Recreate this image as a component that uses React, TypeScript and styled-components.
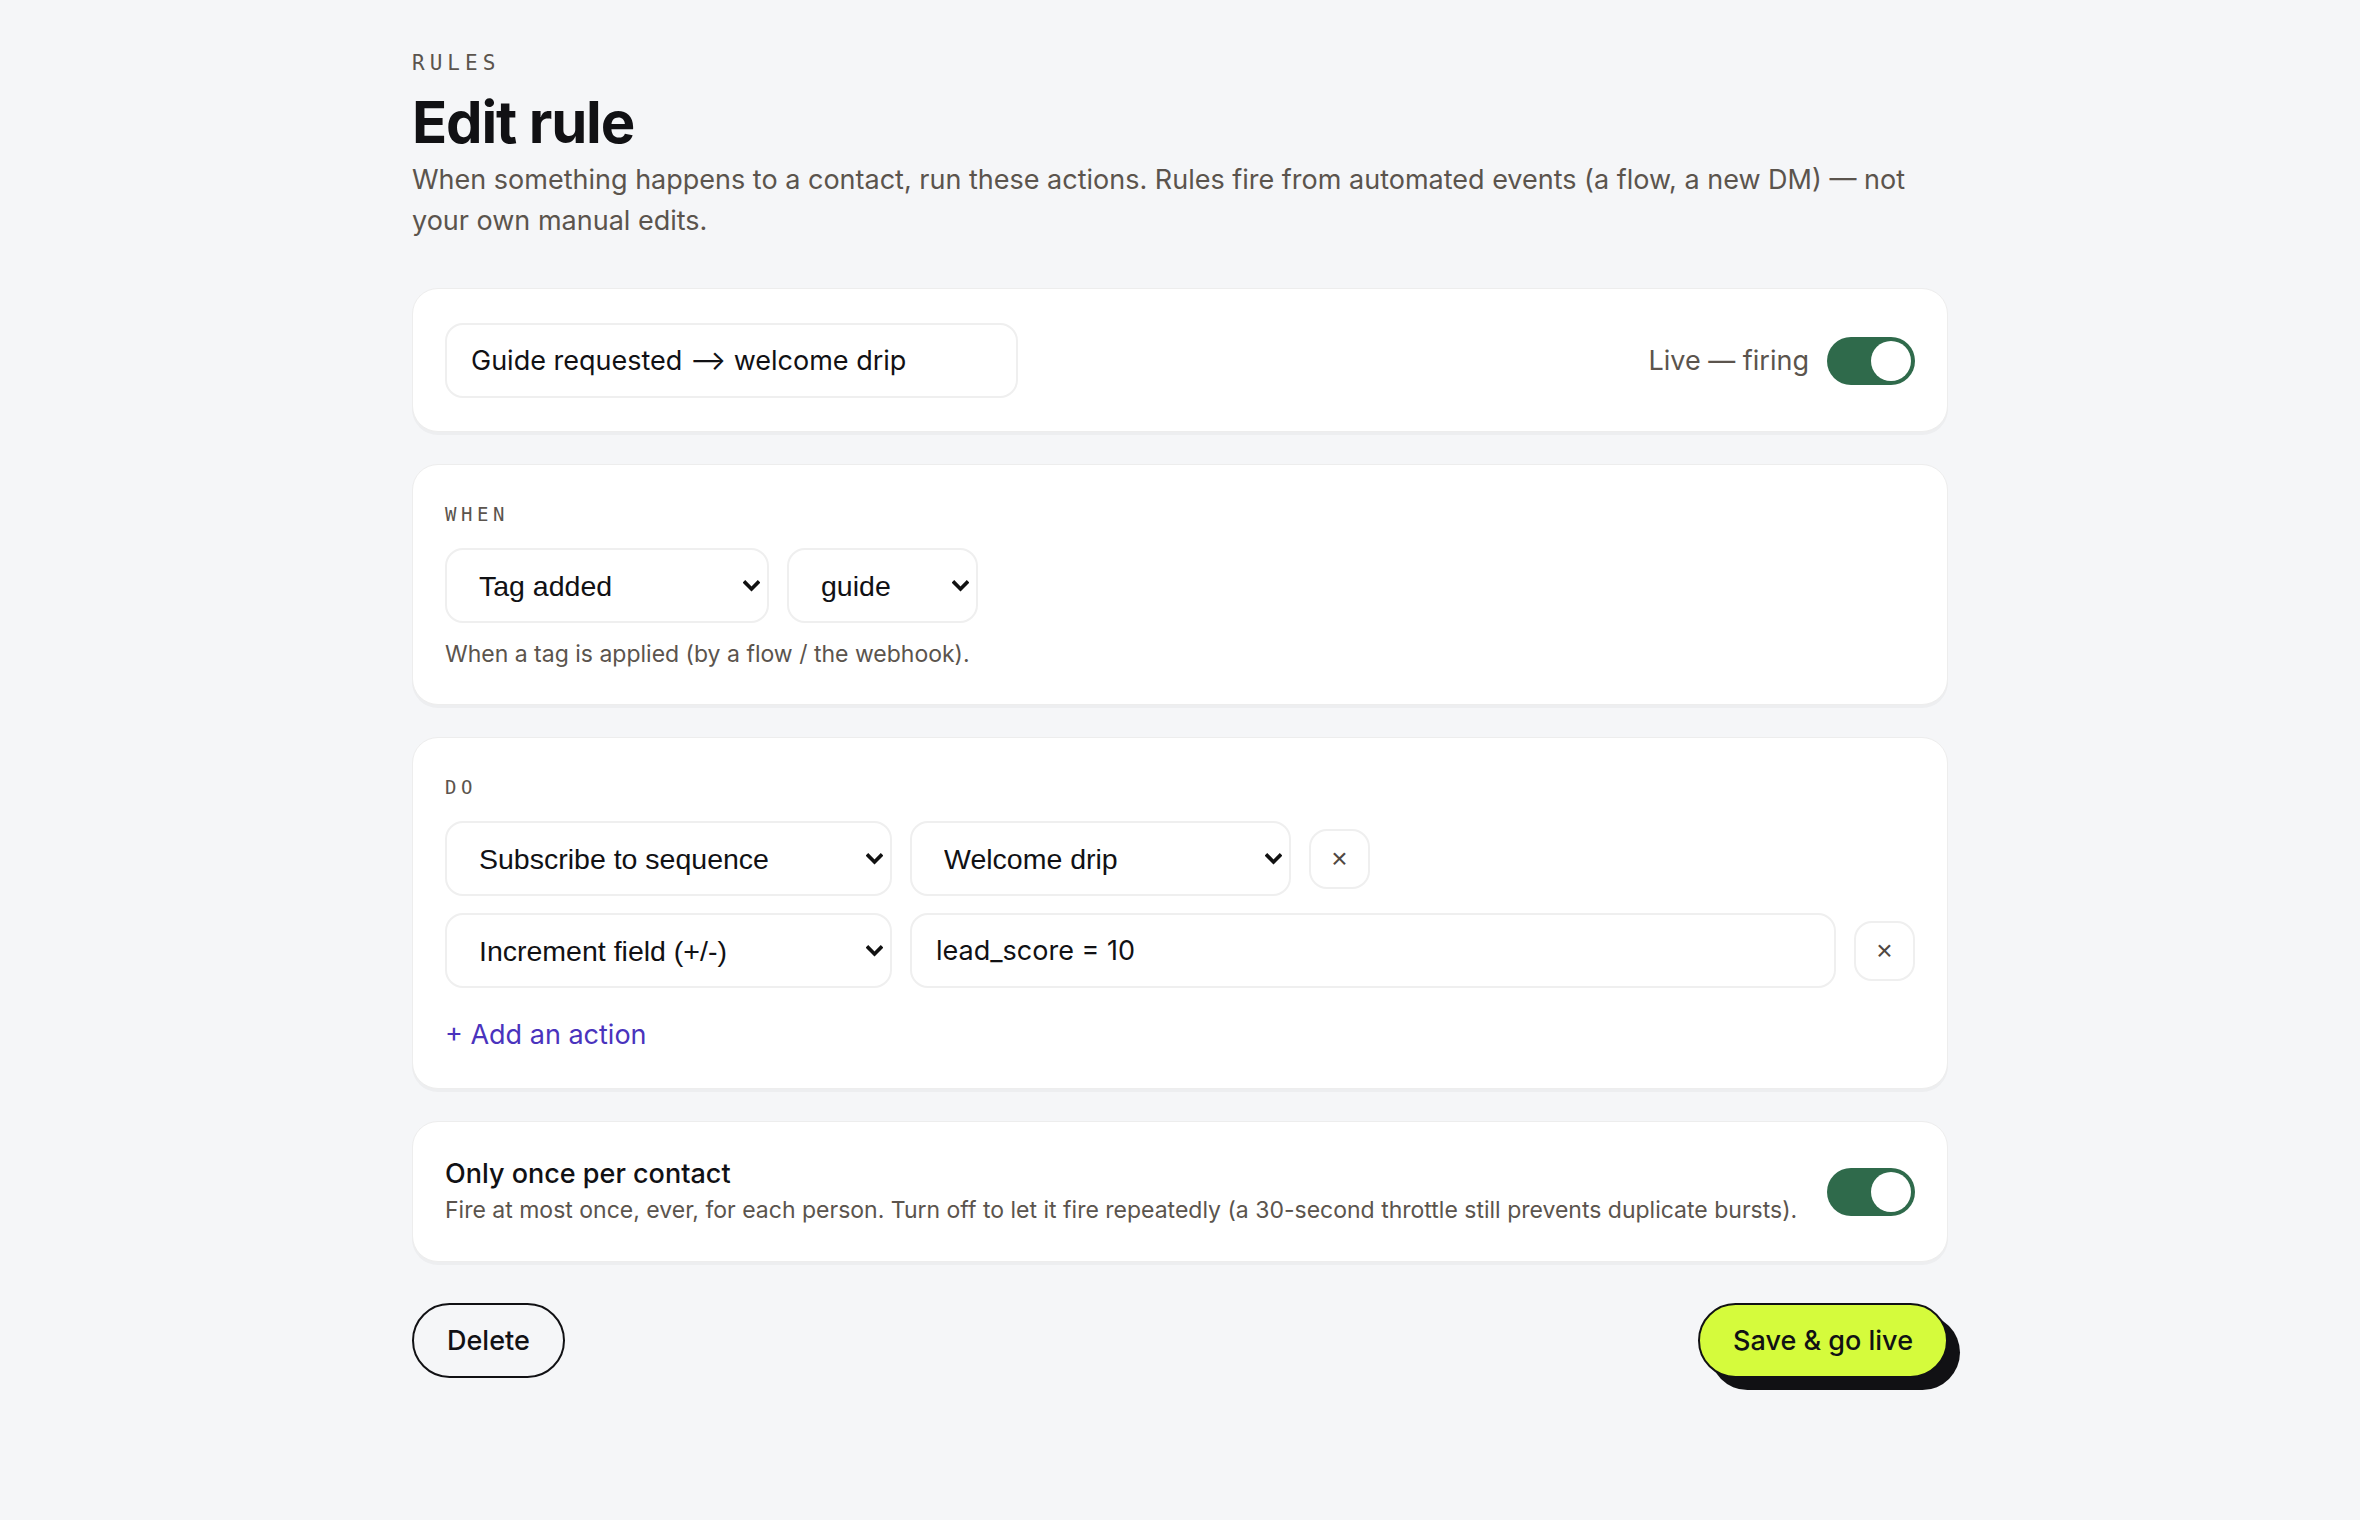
import React from "react";
import styled, { createGlobalStyle } from "styled-components";

const GlobalStyle = createGlobalStyle`
  html, body {
    margin: 0;
    padding: 0;
    background: #f5f6f8;
  }
  body {
    font-family: Inter, "Noto Sans", "Liberation Sans", sans-serif;
    color: #111114;
    -webkit-font-smoothing: antialiased;
  }
  * { box-sizing: border-box; }
`;

const Page = styled.main`
  width: 1536px;
  margin: 0 auto;
  padding: 48px 0 120px;
`;

const Eyebrow = styled.div`
  font-family: "DejaVu Sans Mono", "Liberation Mono", monospace;
  font-size: 21px;
  line-height: 30px;
  letter-spacing: 0.24em;
  color: #5b544d;
  text-transform: uppercase;
`;

const Title = styled.h1`
  margin: 12px 0 0;
  font-size: 58px;
  line-height: 64px;
  font-weight: 700;
  letter-spacing: -0.02em;
  color: #111114;
`;

const Lead = styled.p`
  margin: 5px 0 0;
  max-width: 1500px;
  font-size: 27px;
  line-height: 41px;
  color: #5b544d;
`;

const Stack = styled.div`
  display: flex;
  flex-direction: column;
  gap: 32px;
  margin-top: 47px;
`;

const Card = styled.section`
  background: #ffffff;
  border: 1.5px solid #ededed;
  border-radius: 26px;
  box-shadow: 0 3px 0 rgba(20, 20, 30, 0.035);
  padding: 34px 32px 33px;
`;

const HeaderRow = styled.div`
  display: flex;
  align-items: center;
  justify-content: space-between;
`;

const TextField = styled.input<{ $width?: number }>`
  height: 75px;
  width: ${(p) => (p.$width ? `${p.$width}px` : "auto")};
  flex: ${(p) => (p.$width ? "0 0 auto" : "1 1 auto")};
  padding: 0 24px;
  border: 2px solid #efefef;
  border-radius: 18px;
  background: #fff;
  font-family: Inter, "Liberation Sans", sans-serif;
  font-size: 27px;
  color: #111114;
  outline: none;
`;

const LiveGroup = styled.div`
  display: flex;
  align-items: center;
  gap: 18px;
  font-size: 27px;
  color: #5b544d;
`;

const Toggle = styled.span<{ $on: boolean }>`
  position: relative;
  display: inline-block;
  flex: 0 0 auto;
  width: 88px;
  height: 48px;
  border-radius: 999px;
  background: ${(p) => (p.$on ? "#2f6a4b" : "#cfcfcf")};

  &::after {
    content: "";
    position: absolute;
    top: 4px;
    left: ${(p) => (p.$on ? "44px" : "4px")};
    width: 40px;
    height: 40px;
    border-radius: 50%;
    background: #ffffff;
  }
`;

const SectionLabel = styled.div`
  font-family: "DejaVu Sans Mono", "Liberation Mono", monospace;
  font-size: 19px;
  line-height: 30px;
  letter-spacing: 0.24em;
  color: #5b544d;
  margin-bottom: 19px;
`;

const Row = styled.div`
  display: flex;
  align-items: center;
  gap: 18px;

  & + & {
    margin-top: 17px;
  }
`;

const SelectWrap = styled.div<{ $width: number }>`
  position: relative;
  flex: 0 0 auto;
  width: ${(p) => p.$width}px;
`;

const NativeSelect = styled.select`
  appearance: none;
  -webkit-appearance: none;
  width: 100%;
  height: 75px;
  padding: 0 48px 0 32px;
  border: 2px solid #efefef;
  border-radius: 18px;
  background: #fff;
  font-family: "Liberation Sans", Arial, sans-serif;
  font-size: 28.5px;
  color: #111114;
  outline: none;
`;

const Chevron = styled.svg`
  position: absolute;
  right: 9px;
  top: 50%;
  width: 17px;
  height: 12px;
  transform: translateY(-50%);
  pointer-events: none;
`;

const Helper = styled.p`
  margin: 15px 0 0;
  font-size: 23px;
  line-height: 33px;
  color: #5b544d;
`;

const RemoveButton = styled.button`
  flex: 0 0 auto;
  width: 61px;
  height: 60px;
  border: 2px solid #efefef;
  border-radius: 18px;
  background: #fff;
  font-family: "Liberation Sans", Arial, sans-serif;
  font-size: 28px;
  line-height: 1;
  color: #4f4842;
  cursor: pointer;
`;

const AddLink = styled.button`
  display: block;
  margin-top: 27px;
  padding: 0;
  border: 0;
  background: none;
  font-family: Inter, "Liberation Sans", sans-serif;
  font-size: 27px;
  line-height: 40px;
  color: #4a33bd;
  cursor: pointer;
`;

const OptionRow = styled.div`
  display: flex;
  align-items: center;
  justify-content: space-between;
  gap: 24px;
`;

const OptionTitle = styled.div`
  font-size: 27px;
  line-height: 36px;
  font-weight: 500;
  color: #111114;
`;

const OptionHint = styled.div`
  margin-top: 1px;
  font-size: 23px;
  line-height: 35px;
  color: #5b544d;
`;

const Footer = styled.div`
  display: flex;
  align-items: center;
  justify-content: space-between;
  margin-top: 41px;
`;

const PillButton = styled.button<{ $primary?: boolean }>`
  height: 75px;
  padding: 0 33px;
  border: 2px solid #111114;
  border-radius: 999px;
  background: ${(p) => (p.$primary ? "#d5fb3c" : "transparent")};
  box-shadow: ${(p) => (p.$primary ? "12px 12px 0 #111114" : "none")};
  font-family: Inter, "Liberation Sans", sans-serif;
  font-size: 27px;
  font-weight: 500;
  color: #111114;
  cursor: pointer;
`;

function Select({ width, value, options }: { width: number; value: string; options: string[] }) {
  return (
    <SelectWrap $width={width}>
      <NativeSelect defaultValue={value}>
        {options.map((o) => (
          <option key={o} value={o}>
            {o}
          </option>
        ))}
      </NativeSelect>
      <Chevron viewBox="0 0 17 12" aria-hidden="true">
        <path d="M2.2 2.6 L8.5 8.9 L14.8 2.6" fill="none" stroke="#111" strokeWidth="3.6" strokeLinecap="square" />
      </Chevron>
    </SelectWrap>
  );
}

const actionTypes = ["Subscribe to sequence", "Increment field (+/-)", "Add tag", "Remove tag", "Send DM"];

export default function App() {
  return (
    <>
      <GlobalStyle />
      <Page>
        <Eyebrow>Rules</Eyebrow>
        <Title>Edit rule</Title>
        <Lead>
          When something happens to a contact, run these actions. Rules fire from automated events (a flow, a new DM) — not
          your own manual edits.
        </Lead>

        <Stack>
          <Card>
            <HeaderRow>
              <TextField $width={573} defaultValue="Guide requested ⟶ welcome drip" />
              <LiveGroup>
                Live — firing
                <Toggle $on role="switch" aria-checked="true" />
              </LiveGroup>
            </HeaderRow>
          </Card>

          <Card>
            <SectionLabel>WHEN</SectionLabel>
            <Row>
              <Select width={324} value="Tag added" options={["Tag added", "Tag removed", "New DM", "Field changed"]} />
              <Select width={191} value="guide" options={["guide", "lead", "vip"]} />
            </Row>
            <Helper>When a tag is applied (by a flow / the webhook).</Helper>
          </Card>

          <Card>
            <SectionLabel>DO</SectionLabel>
            <Row>
              <Select width={447} value="Subscribe to sequence" options={actionTypes} />
              <Select width={381} value="Welcome drip" options={["Welcome drip", "Nurture series"]} />
              <RemoveButton aria-label="Remove action">×</RemoveButton>
            </Row>
            <Row>
              <Select width={447} value="Increment field (+/-)" options={actionTypes} />
              <TextField defaultValue="lead_score = 10" />
              <RemoveButton aria-label="Remove action">×</RemoveButton>
            </Row>
            <AddLink>+ Add an action</AddLink>
          </Card>

          <Card>
            <OptionRow>
              <div>
                <OptionTitle>Only once per contact</OptionTitle>
                <OptionHint>
                  Fire at most once, ever, for each person. Turn off to let it fire repeatedly (a 30-second throttle still
                  prevents duplicate bursts).
                </OptionHint>
              </div>
              <Toggle $on role="switch" aria-checked="true" />
            </OptionRow>
          </Card>
        </Stack>

        <Footer>
          <PillButton>Delete</PillButton>
          <PillButton $primary>Save &amp; go live</PillButton>
        </Footer>
      </Page>
    </>
  );
}
